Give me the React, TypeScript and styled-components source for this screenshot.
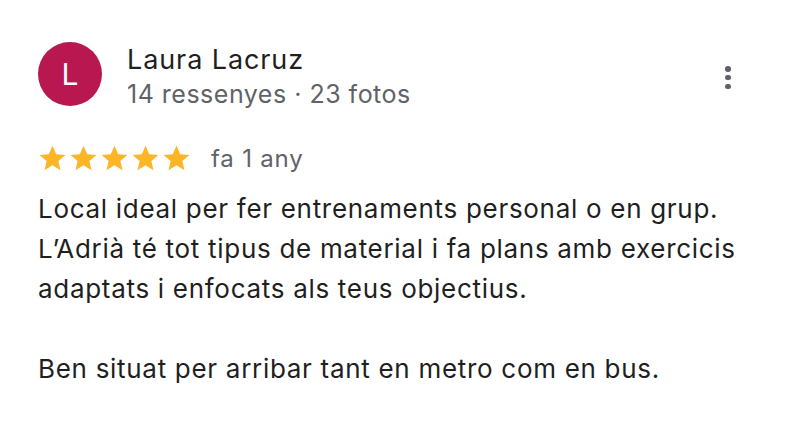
import React from 'react'
import styled, { createGlobalStyle } from 'styled-components'

const GlobalStyle = createGlobalStyle`
  html, body {
    margin: 0;
    padding: 0;
    background: #ffffff;
  }
  body {
    font-family: Inter, Roboto, "Noto Sans", Arial, sans-serif;
    -webkit-font-smoothing: antialiased;
  }
`

const review = {
  author: 'Laura Lacruz',
  initial: 'L',
  meta: '14 ressenyes · 23 fotos',
  rating: 5,
  when: 'fa 1 any',
  paragraphs: [
    [
      'Local ideal per fer entrenaments personal o en grup.',
      'L’Adrià té tot tipus de material i fa plans amb exercicis',
      'adaptats i enfocats als teus objectius.',
    ],
    ['Ben situat per arribar tant en metro com en bus.'],
  ],
}

export default function App(): JSX.Element {
  return (
    <>
      <GlobalStyle />
      <Card>
        <Header>
          <Avatar>{review.initial}</Avatar>
          <Author>
            <Name>{review.author}</Name>
            <Meta>{review.meta}</Meta>
          </Author>
          <MenuButton aria-label="Més opcions">
            <Dot />
            <Dot />
            <Dot />
          </MenuButton>
        </Header>
        <RatingRow>
          <Stars>
            {Array.from({ length: review.rating }).map((_, i) => (
              <Star key={i} />
            ))}
          </Stars>
          <When>{review.when}</When>
        </RatingRow>
        <Body>
          {review.paragraphs.map((lines, i) => (
            <Paragraph key={i}>
              {lines.map((line, j) => (
                <Line key={j}>{line}</Line>
              ))}
            </Paragraph>
          ))}
        </Body>
      </Card>
    </>
  )
}

function Star() {
  return (
    <StarSvg viewBox="0 0 24 24">
      <path
        fill="#fbb527"
        d="M12 17.27L18.18 21l-1.64-7.03L22 9.24l-7.19-.61L12 2 9.19 8.63 2 9.24l5.46 4.73L5.82 21z"
      />
    </StarSvg>
  )
}

const Card = styled.div`
  width: 788px;
  height: 422px;
  box-sizing: border-box;
  padding: 42px 38px 0 38px;
  background: #ffffff;
  color: #1f1f1f;
`

const Header = styled.div`
  display: flex;
  align-items: flex-start;
  gap: 25px;
`

const Avatar = styled.div`
  width: 64px;
  height: 64px;
  border-radius: 50%;
  background: #b8174f;
  color: #ffffff;
  display: flex;
  align-items: center;
  justify-content: center;
  font-size: 30px;
  flex-shrink: 0;
`

const Author = styled.div`
  display: flex;
  flex-direction: column;
  flex: 1;
  margin-top: 1px;
`

const Name = styled.div`
  font-size: 27px;
  line-height: 34px;
  letter-spacing: 0.9px;
  color: #1f1f1f;
`

const Meta = styled.div`
  font-size: 25px;
  line-height: 34px;
  letter-spacing: 0.5px;
  color: #5f6368;
`

const MenuButton = styled.div`
  display: flex;
  flex-direction: column;
  align-items: center;
  gap: 3.3px;
  width: 24px;
  margin-top: 24px;
  margin-right: 10px;
`

const Dot = styled.span`
  width: 5.5px;
  height: 5.5px;
  border-radius: 50%;
  background: #5f6368;
`

const RatingRow = styled.div`
  display: flex;
  align-items: center;
  gap: 19px;
  margin-top: 31.5px;
  height: 31px;
`

const Stars = styled.div`
  display: flex;
  margin-left: -1px;
`

const StarSvg = styled.svg`
  width: 31px;
  height: 31px;
  display: block;
`

const When = styled.div`
  font-size: 24px;
  line-height: 31px;
  letter-spacing: 0.8px;
  color: #5f6368;
`

const Body = styled.div`
  margin-top: 15.5px;
  font-size: 26px;
  line-height: 40px;
  letter-spacing: 0.7px;
  color: #1f1f1f;
`

const Paragraph = styled.div`
  & + & {
    margin-top: 40px;
  }
`

const Line = styled.div`
  white-space: nowrap;
`
